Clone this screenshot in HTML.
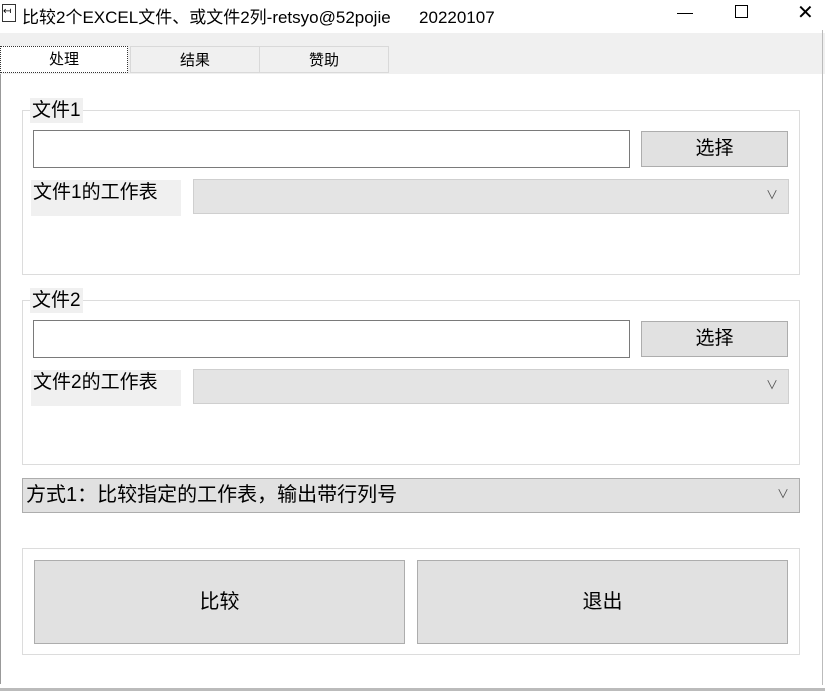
<!DOCTYPE html><html><head><meta charset="utf-8"><style>
body{margin:0;width:825px;height:691px;background:#fff;font-family:"Liberation Sans","Noto Sans CJK SC",sans-serif;position:relative;overflow:hidden;color:#000}
div{position:absolute;box-sizing:border-box}
.grp{border:1px solid #dcdcdc}
.lbl{background:#f0f0f0;font-size:19px;line-height:25px;padding:0 2px;white-space:nowrap}
.tb{border:1px solid #7a7a7a;background:#fff}
.btn{border:1px solid #adadad;background:#e1e1e1;font-size:19px;text-align:center}
.cb{border:1px solid #cfcfcf;background:#e4e4e4}
.ar{right:10px;top:7px;font-size:12px;line-height:16px;color:#555}
</style></head><body>
<div style="left:0;top:0;width:825px;height:33px;background:#fff"></div>
<div style="left:2px;top:4px;width:14px;height:18px;border:1px solid #333;font-size:10px;line-height:14px">↤</div>
<div style="left:22px;top:3px;font-size:17px;white-space:nowrap">比较2个EXCEL文件、或文件2列-retsyo@52pojie&nbsp;&nbsp;&nbsp;&nbsp;&nbsp;&nbsp;20220107</div>
<div style="left:677px;top:13px;width:16px;height:1px;background:#000"></div>
<div style="left:735px;top:5px;width:13px;height:13px;border:1px solid #000"></div>
<div style="left:797px;top:0px;font-size:20px;font-weight:300">✕</div>
<div style="left:0;top:33px;width:825px;height:41px;background:#f0f0f0"></div>
<div style="left:0;top:46px;width:128px;height:27px;background:#fff;border:1px dotted #333;text-align:center;font-size:15px;line-height:25px">处理</div>
<div style="left:130px;top:46px;width:130px;height:27px;background:#f0f0f0;border:1px solid #d9d9d9;text-align:center;font-size:15px;line-height:27px">结果</div>
<div style="left:259px;top:46px;width:130px;height:27px;background:#f0f0f0;border:1px solid #d9d9d9;text-align:center;font-size:15px;line-height:27px">赞助</div>
<div style="left:0;top:74px;width:1px;height:610px;background:#999"></div>
<div style="left:822px;top:30px;width:1px;height:655px;background:#bbb"></div>
<div style="left:0;top:688px;width:825px;height:3px;background:#bbb"></div>

<div class="grp" style="left:22px;top:110px;width:778px;height:165px"></div>
<div class="lbl" style="left:30px;top:98px">文件1</div>
<div class="tb" style="left:33px;top:130px;width:597px;height:38px"></div>
<div class="btn" style="left:641px;top:131px;width:147px;height:36px;line-height:34px">选择</div>
<div class="lbl" style="left:31px;top:180px;width:150px;height:36px">文件1的工作表</div>
<div class="cb" style="left:193px;top:179px;width:596px;height:35px"><div class="ar">∨</div></div>

<div class="grp" style="left:22px;top:300px;width:778px;height:165px"></div>
<div class="lbl" style="left:30px;top:288px">文件2</div>
<div class="tb" style="left:33px;top:320px;width:597px;height:38px"></div>
<div class="btn" style="left:641px;top:321px;width:147px;height:36px;line-height:34px">选择</div>
<div class="lbl" style="left:31px;top:370px;width:150px;height:36px">文件2的工作表</div>
<div class="cb" style="left:193px;top:369px;width:596px;height:35px"><div class="ar">∨</div></div>

<div class="cb" style="left:22px;top:478px;width:778px;height:35px;border-color:#adadad;background:#e1e1e1;font-size:20px;line-height:33px;padding-left:3px;white-space:nowrap">方式1：比较指定的工作表，输出带行列号<div class="ar">∨</div></div>

<div class="grp" style="left:22px;top:548px;width:778px;height:107px"></div>
<div class="btn" style="left:34px;top:560px;width:371px;height:84px;line-height:82px;font-size:20px">比较</div>
<div class="btn" style="left:417px;top:560px;width:371px;height:84px;line-height:82px;font-size:20px">退出</div>
</body></html>
